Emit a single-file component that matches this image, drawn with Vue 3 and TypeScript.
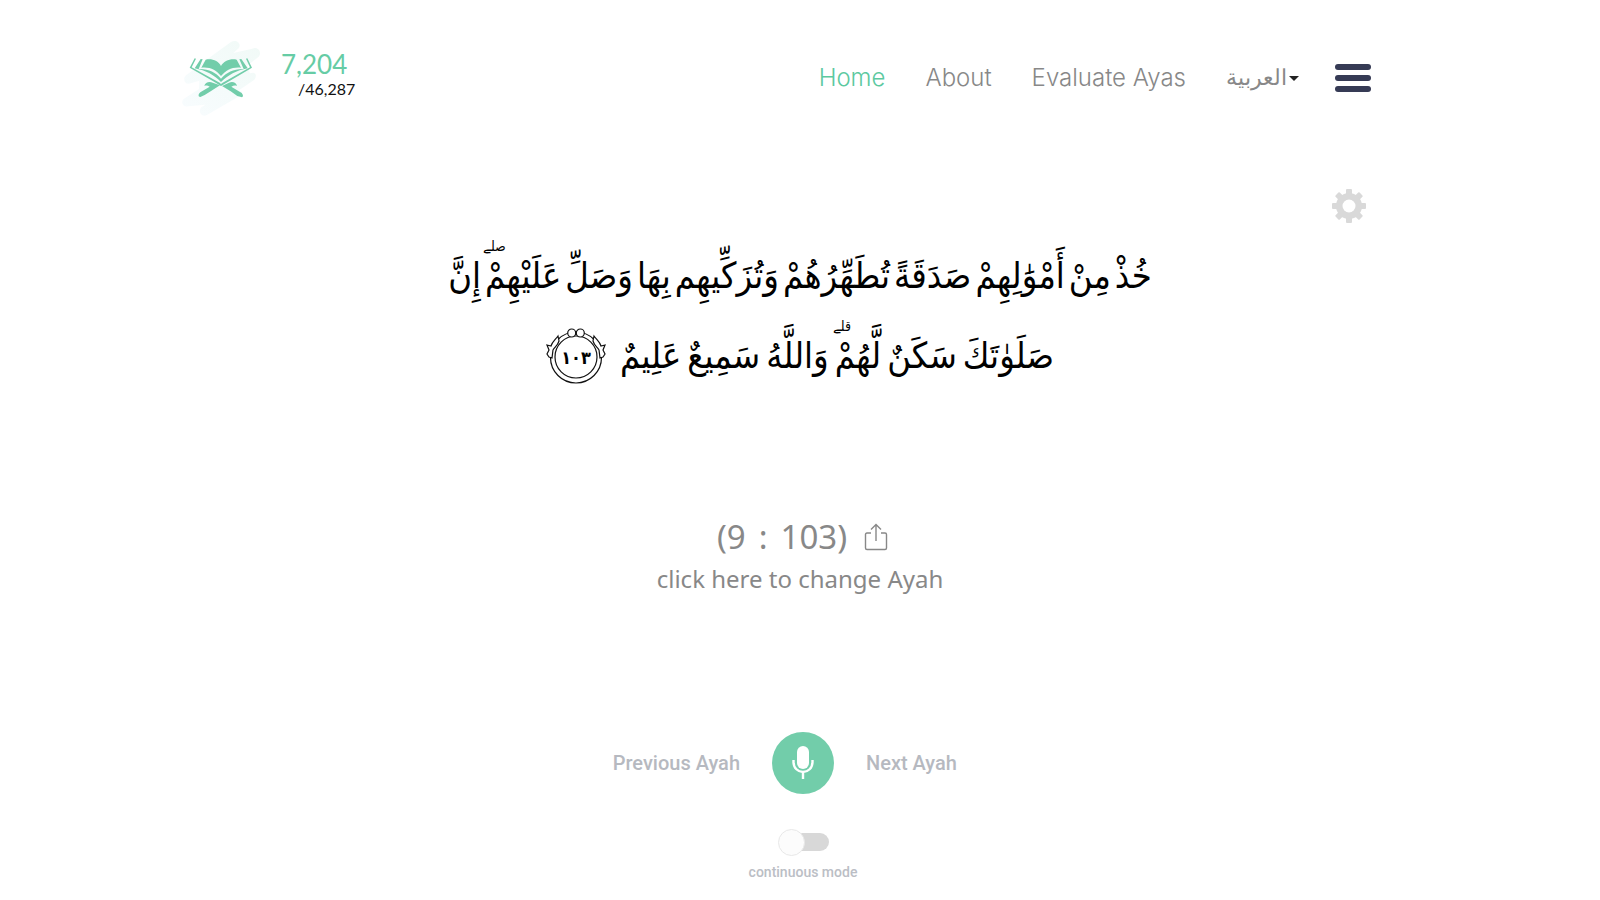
<script setup lang="ts">
import { ref } from 'vue'

interface NavLink {
  label: string
  active: boolean
}

interface Word {
  text: string
  pause?: string
}

const links: NavLink[] = [
  { label: 'Home', active: true },
  { label: 'About', active: false },
  { label: 'Evaluate Ayas', active: false },
]

const split = (line: string): Word[] =>
  line.split(' ').map((part) => {
    const [text, pause] = part.split('|')
    return { text, pause }
  })

const firstLine = split('خُذْ مِنْ أَمْوَٰلِهِمْ صَدَقَةً تُطَهِّرُهُمْ وَتُزَكِّيهِم بِهَا وَصَلِّ عَلَيْهِمْ|صلے إِنَّ')
const secondLine = split('صَلَوٰتَكَ سَكَنٌ لَّهُمْ|قلے وَاللَّهُ سَمِيعٌ عَلِيمٌ')
const continuous = ref(false)
</script>

<template>
  <div class="page">
    <header class="header">
      <a class="brand" href="#" aria-label="Home">
        <svg class="logo" viewBox="30 30 246 240" aria-hidden="true">
          <defs>
            <linearGradient id="haze" x1="1" y1="0" x2="0" y2="1">
              <stop offset="0" stop-color="#f1faf7" />
              <stop offset="1" stop-color="#f8fcfe" />
            </linearGradient>
          </defs>
          <path
            fill="url(#haze)"
            d="M183 42C198 32 216 46 206 61L190 75 247 62C264 54 278 74 265 87L232 113 240 136C258 128 262 145 253 155L207 187 217 193 205 206 112 260C96 270 82 252 94 238L106 230 55 235C40 240 30 222 42 212L87 183 88 158 62 166C46 173 36 153 48 142L67 128 130 80Z"
          />
          <g fill="#72cdaa">
            <path d="M107 95C126 91 146 99 153 114C161 99 181 91 200 95L213 119C186 116 168 127 153 144C139 127 121 116 94 119Z" />
            <path d="M98 94 86 123C115 122 137 133 153 152C170 133 192 122 221 123L208 94 214 93 233 121C199 127 174 142 153 162C133 142 108 127 74 121L92 93Z" />
            <path d="M78 92 65 118 149 164 153 168 158 164 240 118 228 92 232 91 246 119 180 158 153 174 127 158 59 119 74 91Z" />
            <path d="M103 174C105 163 118 159 128 164L150 172 122 190 104 201 91 207C84 207 84 199 91 193L119 176C113 172 108 172 103 174Z" />
            <path d="M201 174C199 163 187 159 177 164L156 174 182 190 202 204 216 208C221 206 219 200 215 195L184 176C191 172 196 172 201 174Z" />
          </g>
        </svg>
        <span class="counter">
          <span class="count">7,204</span>
          <span class="total">/46,287</span>
        </span>
      </a>
      <nav class="nav">
        <a v-for="link in links" :key="link.label" href="#" :class="{ active: link.active }">{{ link.label }}</a>
        <button class="language" type="button"><span class="caret"></span><span lang="ar">العربية</span></button>
        <button class="menu" type="button" aria-label="Menu"><i></i><i></i><i></i></button>
      </nav>
    </header>

    <div class="tools">
      <button class="settings" type="button" aria-label="Settings">
        <svg viewBox="0 0 34 34" aria-hidden="true">
          <g fill="#d9d9d9">
            <rect v-for="n in 4" :key="n" x="14" y="0" width="6" height="34" rx="1" :transform="`rotate(${n * 45} 17 17)`" />
            <circle cx="17" cy="17" r="13" />
          </g>
          <circle cx="17" cy="17" r="6.5" fill="#fff" />
        </svg>
      </button>
    </div>

    <main>
      <div class="verse" lang="ar" dir="rtl">
        <p class="line">
          <span v-for="word in firstLine" :key="word.text" class="word">{{ word.text }}<small v-if="word.pause">{{ word.pause }}</small></span>
        </p>
        <p class="line last">
          <span v-for="word in secondLine" :key="word.text" class="word">{{ word.text }}<small v-if="word.pause">{{ word.pause }}</small></span>
          <svg class="marker" viewBox="0 0 60 56">
            <g fill="#fff" stroke="#111" stroke-width="1.2">
              <circle cx="30" cy="29.500" r="25.500" />
              <circle cx="30" cy="29" r="21" />
              <path d="M12 8 13 13C12 17 9 19 7 22L6 30 3 29 1 26 3 22 1 17 5 18C6 14 9 12 12 8ZM48 8 47 13C48 17 51 19 53 22L54 30 57 29 59 26 57 22 59 17 55 18C54 14 51 12 48 8Z" />
              <circle cx="25.700" cy="5" r="4" />
              <circle cx="34.300" cy="5" r="4" />
            </g>
            <text x="30" y="36" text-anchor="middle">١٠٣</text>
          </svg>
        </p>
      </div>

      <div class="reference">
        <div class="place">
          <span class="numbers"><span>(9</span> <span>:</span> <span>103)</span></span>
          <button type="button" class="share" aria-label="Share">
            <svg viewBox="0 0 24 28" fill="none" stroke="#888" stroke-width="1.4" aria-hidden="true">
              <path d="M7 10H3Q1.500 10 1.500 11.500V25Q1.500 26.500 3 26.500H21Q22.500 26.500 22.500 25V11.500Q22.500 10 21 10H17M12 18V1.500M7 6.500 12 1.500 17 6.500" />
            </svg>
          </button>
        </div>
        <button type="button" class="change">click here to change Ayah</button>
      </div>
    </main>

    <section class="controls">
      <button type="button" class="previous">Previous Ayah</button>
      <button type="button" class="mic" aria-label="Record">
        <svg viewBox="0 0 22 34" aria-hidden="true">
          <rect x="5" y="0" width="12" height="23" rx="6" fill="#fff" />
          <path d="M1.500 14V16C1.500 22 6 26 11 26S20.500 22 20.500 16V14M11 26V33" fill="none" stroke="#fff" stroke-width="2.400" />
        </svg>
      </button>
      <button type="button" class="next">Next Ayah</button>
    </section>
    <label class="mode">
      <input v-model="continuous" type="checkbox" role="switch" />
      <span>continuous mode</span>
    </label>
  </div>
</template>

<style>
body {
  margin: 0;
  background: #fff;
}
</style>

<style scoped>
.page {
  font-family: Lato, "DejaVu Sans", sans-serif;
  color: #888;
}
button {
  padding: 0;
  border: 0;
  background: none;
  font: inherit;
  color: inherit;
  cursor: pointer;
}
a {
  color: inherit;
  text-decoration: none;
}
svg {
  display: block;
}
.header {
  display: flex;
  justify-content: space-between;
  align-items: center;
  padding: 38px 229px 0 180px;
}
.brand {
  display: flex;
  gap: 19px;
}
.logo {
  width: 82px;
  height: 80px;
}
.counter {
  display: flex;
  flex-direction: column;
  padding-top: 10px;
}
.count {
  font-size: 26px;
  line-height: 32px;
  color: #66cca5;
}
.total {
  padding-left: 17px;
  font-size: 16px;
  line-height: 18px;
  color: #111;
}
.nav {
  display: flex;
  align-items: center;
  gap: 40px;
  font-family: Inter, sans-serif;
  font-size: 24px;
  font-weight: 300;
  line-height: 32px;
}
.nav .active {
  color: #5cc9a0;
}
.language {
  display: flex;
  flex-direction: row-reverse;
  align-items: center;
  gap: 2px;
  font-family: "DejaVu Sans", sans-serif;
  font-size: 22px;
}
.caret {
  border: 5px solid transparent;
  border-top-color: #222;
  border-bottom: 0;
}
.menu {
  display: flex;
  flex-direction: column;
  gap: 5px;
  width: 36px;
}
.language + .menu {
  margin-left: -4px;
}
.menu i {
  height: 6px;
  border-radius: 3px;
  background: #363b55;
}
.tools {
  display: flex;
  justify-content: flex-end;
  padding: 71px 234px 0 0;
}
.settings svg {
  width: 34px;
  height: 34px;
}
.verse {
  padding-top: 13px;
  font-family: "DejaVu Sans Condensed", "DejaVu Sans", sans-serif;
  font-size: 36px;
  line-height: 80px;
  color: #000;
}
.line {
  display: flex;
  justify-content: center;
  align-items: center;
  gap: 4px;
  margin: 0;
  white-space: nowrap;
}
.last {
  gap: 6px;
}
.word {
  position: relative;
}
.word small {
  position: absolute;
  left: -2px;
  top: 2px;
  font-size: 14px;
  line-height: 16px;
}
.marker {
  width: 60px;
  height: 56px;
  margin-right: 8px;
}
.marker text {
  font-size: 18px;
  font-weight: 700;
}
.reference {
  display: flex;
  flex-direction: column;
  align-items: center;
  padding-top: 117px;
}
.place {
  display: flex;
  align-items: center;
  gap: 17px;
  padding-left: 5px;
  font-family: "Noto Sans", sans-serif;
  font-size: 33px;
  line-height: 48px;
}
.numbers {
  display: flex;
  gap: 13px;
}
.share svg {
  width: 24px;
  height: 28px;
}
.change {
  font-family: "Noto Sans", sans-serif;
  font-size: 24px;
  line-height: 36px;
}
.controls {
  display: grid;
  grid-template-columns: 1fr auto 1fr;
  align-items: center;
  gap: 32px;
  padding: 135px 0 0 6px;
  font-family: Roboto, sans-serif;
  font-size: 20px;
  font-weight: 500;
  color: #b6b9c0;
}
.previous {
  justify-self: end;
}
.next {
  justify-self: start;
}
.mic {
  display: grid;
  place-items: center;
  width: 62px;
  height: 62px;
  border-radius: 50%;
  background: #72cdaa;
}
.mic svg {
  width: 22px;
  height: 34px;
}
.mode {
  display: flex;
  flex-direction: column;
  align-items: center;
  gap: 8px;
  padding: 34px 0 16px 6px;
  font-family: Roboto, sans-serif;
  font-size: 14px;
  line-height: 16px;
  font-weight: 500;
  color: #bbbec5;
}
.mode input {
  appearance: none;
  display: flex;
  align-items: center;
  width: 51px;
  height: 28px;
  margin: 0;
}
.mode input::before {
  content: "";
  z-index: 1;
  box-sizing: border-box;
  width: 27px;
  height: 27px;
  border: 1px solid #e8e8e8;
  border-radius: 50%;
  background: #fcfcfc;
}
.mode input::after {
  content: "";
  width: 36px;
  height: 18px;
  margin-left: -12px;
  border-radius: 9px;
  background: #d8d8d8;
}
.mode input:checked {
  flex-direction: row-reverse;
}
.mode input:checked::after {
  margin: 0 -12px 0 0;
}
</style>
